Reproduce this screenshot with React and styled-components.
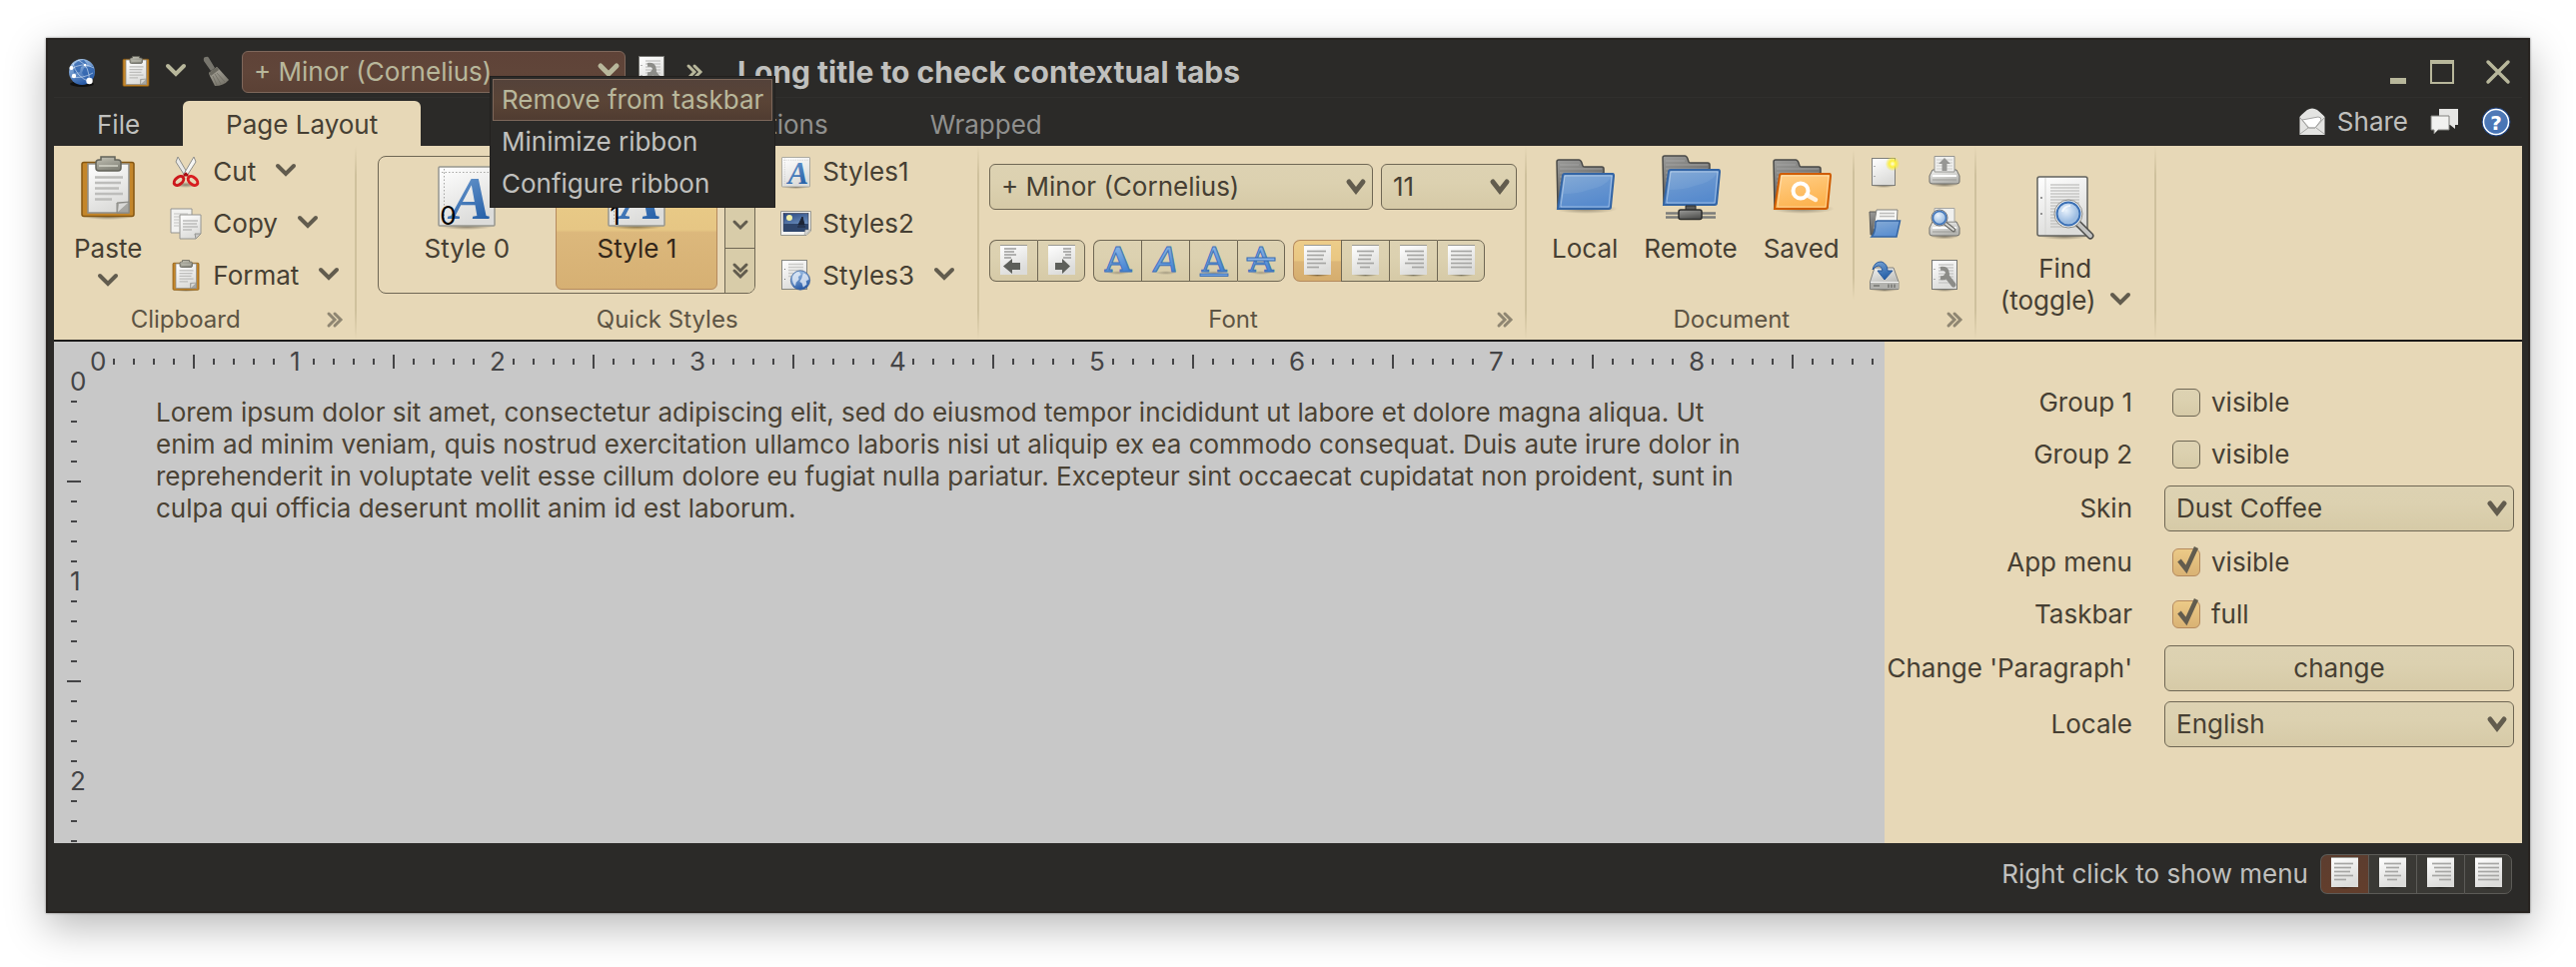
import React from "react";
import styled, { createGlobalStyle, css } from "styled-components";

const c = {
  dark: "#2b2a28",
  darkText: "#c0c0be",
  darkAccent: "#b8b79b",
  sand: "#e7d8b7",
  ink: "#463f33",
  mutedInk: "#5d5444",
  glyph: "#625c4e",
  line: "#6f6754",
  canvas: "#c8c8c8",
  mark: "#444446",
};

const GlobalStyle = createGlobalStyle`
  * { box-sizing: border-box; }
  body { margin: 0; background: #fff; }
  body, button, select, input {
    font-family: Inter, "Liberation Sans", sans-serif;
    font-size: 26px;
    line-height: 32px;
  }
  svg { display: block; flex: none; overflow: visible; }
`;

/* ---------- frame ---------- */

const Page = styled.div`
  height: 100vh;
  min-height: 800px;
  padding: 38px 46px 54px;
  display: flex;
`;

const Window = styled.main`
  flex: 1;
  min-width: 0;
  padding: 0 8px;
  display: flex;
  flex-direction: column;
  background: ${c.dark};
  color: ${c.darkText};
  box-shadow: inset 0 0 0 2px #272320, 0 0 2px rgba(0, 0, 0, 0.5),
    0 14px 38px rgba(0, 0, 0, 0.28);
`;

const PlainButton = styled.button`
  border: 0;
  padding: 0;
  background: none;
  color: inherit;
  display: flex;
  align-items: center;
  white-space: nowrap;
`;

/* ---------- title bar ---------- */

const TitleBar = styled.header`
  height: 60px;
  padding: 8px 8px 0 12px;
  display: flex;
  align-items: center;
  gap: 10px;
  border-bottom: 1px solid #302f2d;
`;

const IconButton = styled(PlainButton)`
  width: 32px;
  height: 40px;
  justify-content: center;
`;

const SplitButton = styled(PlainButton)`
  gap: 14px;
  margin: 0 4px 0 12px;
  & > svg:first-child { margin: 0 2px; }
`;

const Overflow = styled(PlainButton)`
  margin: 0 25px 0 9px;
`;

const Title = styled.h1`
  margin: 0;
  flex: 1;
  font-size: 30px;
  line-height: 36px;
  font-weight: 700;
  white-space: nowrap;
`;

const WindowControls = styled.div`
  display: flex;
  gap: 12px;
  & > :last-child { margin-left: 12px; }
`;

/* ---------- tabs ---------- */

const TabRow = styled.nav`
  height: 48px;
  padding-top: 3px;
  display: flex;
  align-items: stretch;
`;

const Tab = styled(PlainButton)`
  justify-content: center;
  padding: 2px 43px 0;
  color: ${(p) => (p.$quiet ? "#90908e" : c.darkText)};
  ${(p) =>
    p.$selected &&
    css`
      background: ${c.sand};
      color: ${c.ink};
      border-radius: 6px 6px 0 0;
    `}
`;

const LaterTabs = styled.div`
  flex: 1;
  display: flex;
  gap: 16px;
  padding-left: 228px;
`;

const Anchored = styled.div`
  display: flex;
  align-items: center;
  gap: 20px;
  padding: 0 10px 4px 0;
`;

const ShareButton = styled(PlainButton)`
  gap: 12px;
`;

/* ---------- context menu ---------- */

const MenuAnchor = styled.div`
  position: relative;
`;

const Menu = styled.ul`
  position: absolute;
  z-index: 5;
  left: 248px;
  top: 25px;
  margin: 0;
  padding: 2px;
  list-style: none;
  background: ${c.dark};
  border: 1px solid #22201e;
`;

const MenuItem = styled(PlainButton)`
  width: 100%;
  height: 42px;
  padding: 0 8px;
  border: 1px solid ${(p) => (p.$active ? "#7d675a" : "transparent")};
  color: ${(p) => (p.$active ? c.darkAccent : c.darkText)};
  background: ${(p) =>
    p.$active ? "linear-gradient(#54423a, #5a4436 55%, #503c31)" : "none"};
`;

/* ---------- ribbon ---------- */

const Ribbon = styled.section`
  height: 196px;
  display: flex;
  background: ${c.sand};
  color: ${c.ink};
  border-bottom: 2px solid #1c1b1a;
`;

const Separator = styled.div`
  width: 2px;
  flex: none;
  margin: ${(p) => (p.$inner ? "4px 0" : "0")};
  background: linear-gradient(rgba(190, 175, 140, 0), #cfc19d 15%, #cfc19d 85%, rgba(190, 175, 140, 0));
`;

const Group = styled.div`
  display: flex;
  flex-direction: column;
  flex: none;
`;

const GroupBody = styled.div`
  height: 158px;
  display: flex;
  padding: 0 ${(p) => p.$right || 0}px 0 ${(p) => p.$left || 0}px;
`;

const GroupFooter = styled.div`
  display: flex;
  align-items: center;
  padding-top: 1px;
  font-size: 24px;
  line-height: 30px;
  color: ${c.mutedInk};
`;

const GroupName = styled.span`
  flex: 1;
  text-align: center;
`;

const Launcher = styled(PlainButton)`
  width: 38px;
  height: 30px;
  padding-left: 10px;
`;

const BigButton = styled(PlainButton)`
  flex-direction: column;
  align-items: center;
  justify-content: flex-start;
  padding: ${(p) => p.$top || 10}px ${(p) => p.$side || 13}px 0;
  & > svg:first-child { margin-bottom: 13px; }
  & > svg:nth-of-type(2) { margin-top: 7px; }
`;

const TwoLine = styled.span`
  display: grid;
  grid-template-columns: auto auto;
  column-gap: 14px;
  justify-items: center;
  align-items: center;
  & > :first-child { grid-column: 1 / 3; }
`;

const SmallColumn = styled.div`
  display: flex;
  flex-direction: column;
  align-items: flex-start;
  margin-left: ${(p) => p.$gap}px;
`;

const SmallButton = styled(PlainButton)`
  height: 52px;
  & > span + svg { margin-left: 20px; }
`;

const IconSlot = styled.span`
  width: 32px;
  margin-right: 11px;
  display: flex;
  justify-content: center;
`;

const Gallery = styled.div`
  height: 138px;
  margin-top: 10px;
  display: flex;
  border: 1px solid ${c.line};
  border-radius: 8px;
  overflow: hidden;
`;

const GalleryItems = styled.div`
  display: flex;
  gap: 8px;
  padding: 3px 7px;
`;

const GalleryItem = styled(PlainButton)`
  width: 162px;
  flex-direction: column;
  padding-top: ${(p) => (p.$selected ? 5 : 6)}px;
  border-radius: 6px;
  ${(p) =>
    p.$selected &&
    css`
      border: 1px solid #b58a5e;
      color: #33271a;
      background: linear-gradient(#ecd08b, #e6c684 54%, #dcb87c 56%, #d6b073);
    `}
`;

const Swatch = styled.span`
  position: relative;
  margin-bottom: 5px;
`;

const SwatchIndex = styled.span`
  position: absolute;
  left: 2px;
  bottom: -4px;
  color: #000;
`;

const GalleryScroller = styled.div`
  width: 30px;
  display: grid;
  grid-template-rows: repeat(3, 1fr);
  border-left: 1px solid ${c.line};
  background: #d8cca9;
`;

const ScrollButton = styled(PlainButton)`
  justify-content: center;
  & + & { border-top: 1px solid ${c.line}; }
`;

const FontTools = styled.div`
  padding-top: 18px;
  display: flex;
  flex-direction: column;
  gap: 30px;
`;

const ToolRow = styled.div`
  display: flex;
  gap: 8px;
`;

const IconGrid = styled.div`
  display: grid;
  grid-template-columns: 60px 60px;
  grid-auto-rows: 52px;
  justify-items: center;
`;

/* ---------- form controls ---------- */

const raised = css`
  border: 1px solid ${c.line};
  background: linear-gradient(#ddd2b2, #dcd1b0 40%, #d6caa7);
`;

const ComboBox = styled.span`
  position: relative;
  display: flex;
  align-items: center;
  width: ${(p) => p.$width || "100%"};
  & > svg {
    position: absolute;
    right: 7px;
    pointer-events: none;
  }
`;

const Select = styled.select`
  appearance: none;
  width: 100%;
  height: 46px;
  padding: 0 36px 0 11px;
  border-radius: 6px;
  color: ${c.ink};
  ${raised}
  ${(p) =>
    p.$dark &&
    css`
      height: 42px;
      color: ${c.darkAccent};
      border-color: #7e675b;
      background: linear-gradient(#5f4338, #604539 50%, #5b4135);
    `}
`;

const PushButton = styled.button`
  width: 100%;
  height: 46px;
  padding: 0;
  border-radius: 6px;
  color: ${c.ink};
  ${raised}
`;

const Strip = styled.div`
  display: flex;
`;

const StripButton = styled.button`
  width: 48px;
  height: 42px;
  padding: 0;
  display: flex;
  align-items: center;
  justify-content: center;
  ${raised}
  border-right-width: 0;
  &:first-child { border-radius: 7px 0 0 7px; }
  &:last-child { border-radius: 0 7px 7px 0; border-right-width: 1px; }
  ${(p) =>
    p.$selected &&
    css`
      border-color: #b58a5e;
      background: linear-gradient(#edcd8a, #e9c681 50%, #dcb678 52%, #d5ad6e);
    `}
  ${(p) =>
    p.$dark &&
    css`
      height: 40px;
      padding-bottom: 2px;
      border-color: #5c5b57;
      background: ${p.$selected ? "linear-gradient(#5c3d2f, #633e2c)" : "#3a3935"};
    `}
`;

const CheckLabel = styled.label`
  height: 42px;
  margin-left: 8px;
  display: flex;
  align-items: center;
  gap: 11px;
`;

const CheckWrap = styled.span`
  position: relative;
  display: flex;
  & > svg {
    position: absolute;
    left: 0;
    top: -2px;
    pointer-events: none;
  }
`;

const CheckInput = styled.input`
  appearance: none;
  margin: 0;
  width: 28px;
  height: 28px;
  border-radius: 6px;
  ${raised}
  &:checked {
    border-color: #b58a5e;
    background: linear-gradient(#ecca87, #d9b274);
  }
`;

/* ---------- work area ---------- */

const Body = styled.div`
  flex: 1 1 0;
  min-height: 0;
  display: flex;
`;

const Canvas = styled.section`
  flex: 1;
  min-width: 0;
  display: grid;
  grid-template: 30px minmax(0, 1fr) / 30px minmax(0, 1fr);
  background: ${c.canvas};
  color: ${c.mark};
`;

const TopRuler = styled.div`
  grid-column: 2;
  min-width: 0;
  padding-top: 10px;
  display: flex;
  overflow-x: clip;
`;

const SideRuler = styled.div`
  grid-column: 1;
  padding-left: 10px;
  display: flex;
  flex-direction: column;
  overflow-y: clip;
`;

const Mark = styled.span`
  flex: none;
  width: 20px;
  height: 20px;
  display: flex;
  align-items: center;
  justify-content: center;
  &::before {
    content: "";
    background: currentColor;
    width: ${(p) => (p.$side ? (p.$long ? 14 : 6) : 2)}px;
    height: ${(p) => (p.$side ? 2 : p.$long ? 14 : 6)}px;
  }
`;

const MarkNumber = styled.span`
  flex: none;
  width: 20px;
  height: 20px;
  line-height: 20px;
  padding-left: 6px;
`;

const Paragraph = styled.p`
  margin: 0;
  padding: 25px 116px 0 72px;
  color: #4a4234;
`;

const Settings = styled.form`
  width: 638px;
  flex: none;
  padding: 40px 8px 0 2px;
  display: grid;
  grid-template-columns: 1fr 350px;
  column-gap: 32px;
  row-gap: 10px;
  align-content: start;
  align-items: center;
  background: ${c.sand};
  color: ${c.ink};
`;

const FieldName = styled.label`
  text-align: right;
  white-space: nowrap;
`;

const StatusBar = styled.footer`
  height: 70px;
  padding: 0 10px 8px;
  display: flex;
  align-items: center;
  justify-content: flex-end;
  gap: 12px;
`;

/* ---------- glyphs ---------- */

const Defs = () => (
  <svg width="0" height="0" style={{ position: "absolute" }} aria-hidden="true">
    <defs>
      {[
        ["paper", "#ffffff", "#dcdcda"],
        ["steel", "#c6c5b8", "#84847a"],
        ["blue", "#86abd6", "#5c8fd0"],
        ["letter", "#a9c9ec", "#3f80d2"],
        ["serif", "#7ba6d6", "#2660a8"],
        ["orange", "#ffd08a", "#fdb34f"],
        ["grey", "#9c9c9a", "#555553"],
        ["device", "#f4f4f2", "#b4b4b0"],
        ["globe", "#b4d2f0", "#2a5ca8"],
        ["sky", "#28467e", "#7ba0cc"],
        ["brush", "#b0ada2", "#7a776d"],
      ].map(([id, a, b]) => (
        <linearGradient key={id} id={id} x1="0" y1="0" x2="0.4" y2="1">
          <stop offset="0" stopColor={a} />
          <stop offset="1" stopColor={b} />
        </linearGradient>
      ))}
      <radialGradient id="glow">
        <stop offset="0" stopColor="#fffde0" />
        <stop offset="0.45" stopColor="#fdf03c" />
        <stop offset="1" stopColor="#f4e83a" stopOpacity="0.1" />
      </radialGradient>
      <radialGradient id="lens" cx="0.4" cy="0.35">
        <stop offset="0" stopColor="#eaf3fc" />
        <stop offset="1" stopColor="#9dbde2" />
      </radialGradient>
      <radialGradient id="ground">
        <stop offset="0" stopColor="#000" stopOpacity="0.4" />
        <stop offset="1" stopColor="#000" stopOpacity="0" />
      </radialGradient>
    </defs>
  </svg>
);

const Svg = ({ w, h, vw = w, vh = h, children }) => (
  <svg width={w} height={h} viewBox={`0 0 ${vw} ${vh}`} fill="none" aria-hidden="true">
    {children}
  </svg>
);

const Chevron = ({ color = c.glyph, width = 4 }) => (
  <Svg w={20} h={20}>
    <path d="M2 4 L10 12 L18 4" stroke={color} strokeWidth={width} strokeLinecap="round" />
  </Svg>
);

const ComboChevron = ({ color = c.glyph }) => (
  <Svg w={20} h={20}>
    <path d="M3 5 L10 14 L17 5" stroke={color} strokeWidth={5} strokeLinecap="round" />
  </Svg>
);

const MiniChevron = ({ double, up }) => (
  <Svg w={16} h={16}>
    {up ? (
      <path d="M2 11 L8 5 L14 11" stroke={c.glyph} strokeWidth={3} strokeLinecap="round" />
    ) : double ? (
      <path d="M2 2 L8 8 L14 2 M2 8 L8 14 L14 8" stroke={c.glyph} strokeWidth={3} strokeLinecap="round" />
    ) : (
      <path d="M2 5 L8 11 L14 5" stroke={c.glyph} strokeWidth={3} strokeLinecap="round" />
    )}
  </Svg>
);

const DoubleRight = ({ color = "#8f8672" }) => (
  <Svg w={16} h={16}>
    <path d="M2 2 L8 8 L2 14 M8 2 L14 8 L8 14" stroke={color} strokeWidth={3} strokeLinecap="round" />
  </Svg>
);

const ClipboardIcon = ({ small }) => (
  <Svg w={small ? 28 : 54} h={small ? 32 : 64} vw={54} vh={64}>
    <ellipse cx="27" cy="61" rx="25" ry="3" fill="url(#ground)" />
    <rect x="1" y="6.500" width="52" height="54" rx="2" fill="#c4862a" stroke="#855712" strokeWidth="1.500" />
    <path d="M7 8 H48 V57 H7 Z" fill="url(#paper)" stroke="#8e8e8a" strokeWidth="1.500" />
    <path d="M14 21.500 H42 M14 27 H40 M14 32.500 H38 M14 38 H42 M14 43.500 H31" stroke="#bdbdbb" strokeWidth="2.500" />
    <path d="M36 57 V47 L48 46 V57 Z" fill="#a6a6a2" stroke="#858580" />
    <path d="M37 56 L38 48 L47 47 Z" fill="#d8d8d6" />
    <path d="M15 7 Q15 4 18 4 H20 V1 H34 V4 H37 Q40 4 40 7 V12 Q40 15 37 15 H18 Q15 15 15 12 Z" fill="url(#steel)" stroke="#63635a" strokeWidth="1.500" />
    <path d="M18 10 H37" stroke="#d4d4c8" strokeWidth="1.500" />
  </Svg>
);

const ScissorsIcon = () => (
  <Svg w={28} h={32}>
    <ellipse cx="14" cy="29" rx="12" ry="3" fill="url(#ground)" />
    <path d="M6 1 L16 18 L13 20 L4 6 Z" fill="#e9e9e7" stroke="#8e8e8a" />
    <path d="M22 1 L12 18 L15 20 L24 6 Z" fill="#f6f6f4" stroke="#8e8e8a" />
    <path d="M12 20 L14 18 L16 20" stroke="#a80f14" strokeWidth="2.500" />
    <ellipse cx="7" cy="25" rx="5.500" ry="3.500" transform="rotate(-40 7 25)" stroke="#cc181c" strokeWidth="3" />
    <ellipse cx="21" cy="25" rx="5.500" ry="3.500" transform="rotate(40 21 25)" stroke="#d81e20" strokeWidth="3" />
  </Svg>
);

const CopyIcon = () => (
  <Svg w={32} h={32}>
    <path d="M1 1 H22 V25 H1 Z" fill="#f2f2f0" stroke="#949490" />
    <path d="M4 6 H18 M4 9 H18 M4 12 H9 M4 15 H9 M4 18 H9" stroke="#c2c2c0" />
    <path d="M10 7 H31 V26 L26 31 H10 Z" fill="url(#paper)" stroke="#949490" />
    <path d="M13 13 H28 M13 16 H27 M13 19 H28 M13 22 H22" stroke="#bcbcba" strokeWidth="1.500" />
    <path d="M31 26 L25 26 L26 31 Z" fill="#c8c8c6" stroke="#949490" />
  </Svg>
);

const GlobeBall = ({ x, y, r }) => (
  <g transform={`translate(${x} ${y}) scale(${r / 14})`}>
    <circle r="13.500" fill="url(#globe)" stroke="#3c5e94" />
    <path d="M-11 -5 Q-8 -11 -2 -12 L1 -8 L-3 -5 L-2 -1 L-6 3 L-7 8 Q-12 4 -11 -5 Z M4 -10 Q11 -8 12 -1 L8 1 L9 6 L4 10 L2 4 L-1 2 L2 -3 Z" fill="#e6eef8" fillOpacity="0.8" />
  </g>
);

const GlobeIcon = () => (
  <Svg w={28} h={28}>
    <ellipse cx="14" cy="26" rx="12" ry="3" fill="#111" />
    <circle cx="14" cy="14" r="13" fill="url(#globe)" />
    <path d="M5 8 Q9 2 16 2 L19 6 L13 9 L12 14 L6 15 Z M16 10 L25 8 Q28 15 24 21 L18 20 L14 15 Z" fill="#2d62ac" fillOpacity="0.75" />
    <path d="M2 12 Q14 3 26 10 M5 5 Q8 19 22 24 M3 19 Q15 21 25 15 M10 2 Q23 8 21 25" stroke="#e2eefb" strokeOpacity="0.700" strokeWidth="0.800" />
    <circle cx="3.500" cy="10" r="2" fill="#fff" />
    <circle cx="6" cy="18" r="2.200" fill="#fff" />
    <circle cx="21.500" cy="23" r="3.200" fill="#fff" />
    <circle cx="17" cy="7" r="1.200" fill="#fff" />
  </Svg>
);

const BroomIcon = () => (
  <Svg w={28} h={32}>
    <path d="M4 1 Q1 1 2 5 L9 15 L13 12 L7 2 Q6 0 4 1 Z" fill="#77756d" />
    <path d="M7 17 L15 11 L18 14 L27 24 Q22 30 13 30 L8 20 Z" fill="url(#brush)" />
    <path d="M7 17 L15 11 L17 14 L9 20 Z" fill="#6b6960" />
    <path d="M11 20 L15 29 M13 18 L19 28 M15 17 L23 26" stroke="#6a685f" strokeWidth="0.700" />
  </Svg>
);

const Wrench = ({ x = 0, y = 0 }) => (
  <g transform={`translate(${x} ${y})`}>
    <path d="M9 9 Q16 8 16 14 Q15 19 9 18" stroke="#8c8c88" strokeWidth="4" />
    <path d="M15 16 L22 25" stroke="#8c8c88" strokeWidth="5" strokeLinecap="round" />
  </g>
);

const DocWrenchIcon = () => (
  <Svg w={28} h={32}>
    <ellipse cx="14" cy="30" rx="12" ry="2" fill="url(#ground)" />
    <rect x="1.500" y="0.500" width="25" height="29" fill="url(#paper)" stroke="#777773" />
    <path d="M8 5 H23 M8 8 H23 M8 11 H23 M8 14 H23 M8 17 H23 M8 20 H23 M8 23 H20" stroke="#c9c9c7" strokeWidth="1.500" />
    <path d="M4 9 V10 M4 19 V20" stroke="#777" />
    <Wrench x={1} y={0} />
  </Svg>
);

const StyleSwatchIcon = ({ small }) => (
  <Svg w={small ? 29 : 58} h={small ? 31 : 62} vw={58} vh={62}>
    <ellipse cx="29" cy="61" rx="26" ry="3" fill="url(#ground)" />
    <rect x="1" y="1" width="56" height="59" rx="1" fill="url(#paper)" stroke="#96968f" strokeWidth="1.500" />
    <path d="M4 6.500 H54 M6.500 3 V56" stroke="#a6a6a4" strokeDasharray="1.500 2" />
    <text x="13" y="53" fontFamily="Liberation Serif" fontStyle="italic" fontWeight="700" fontSize="62" fill="url(#serif)">A</text>
  </Svg>
);

const PhotoIcon = () => (
  <Svg w={31} h={26}>
    <path d="M0.500 0.500 H30.500 V20 L26 24.500 H0.500 Z" fill="#f2f2f0" stroke="#96968f" />
    <rect x="3" y="2.500" width="25" height="18" fill="url(#sky)" stroke="#223" strokeWidth="0.500" />
    <rect x="3" y="13" width="25" height="8" fill="#2f466c" />
    <circle cx="9" cy="7" r="3" fill="#f2f0a8" />
    <path d="M18 14 L22 6 L24 14 Z M17 16 H25" fill="#1c2436" stroke="#1c2436" />
    <path d="M24 24.500 L25 19 L30.500 19 Z" fill="#d6d6d4" stroke="#96968f" strokeWidth="0.500" />
  </Svg>
);

const DocGlobeIcon = () => (
  <Svg w={29} h={32}>
    <rect x="0.500" y="0.500" width="25" height="29" fill="url(#paper)" stroke="#86867f" />
    <path d="M7 4.500 H22 M7 7.500 H22 M7 10.500 H22 M7 13.500 H12 M7 16.500 H10" stroke="#cacac8" strokeWidth="1.500" />
    <path d="M3.500 9 V10 M3.500 19 V20" stroke="#777" />
    <GlobeBall x={19} y={20.5} r={10} />
  </Svg>
);

const alignLines = {
  left: [[3, 22], [3, 20], [3, 19], [3, 22], [3, 15]],
  center: [[5, 22], [7, 20], [6, 19], [5, 22], [8, 18]],
  right: [[5, 24], [7, 24], [8, 24], [5, 24], [12, 24]],
  justify: [[3, 24], [3, 24], [3, 24], [3, 24], [3, 24]],
};

const AlignIcon = ({ kind }) => (
  <Svg w={27} h={32}>
    <ellipse cx="13.500" cy="30.500" rx="12" ry="1.500" fill="url(#ground)" />
    <rect width="27" height="30" fill="url(#paper)" />
    <path d="M0 0.500 H27" stroke="#9a9a94" />
    {alignLines[kind].map(([a, b], i) => (
      <path key={i} d={`M${a} ${6.5 + i * 4} H${b}`} stroke="#a6a6a4" strokeWidth="1.700" />
    ))}
  </Svg>
);

const IndentIcon = ({ right }) => (
  <Svg w={27} h={32}>
    <rect width="27" height="30" fill="url(#paper)" />
    <path d="M0 0.500 H27" stroke="#9a9a94" />
    <path
      d={right ? "M15 4 H23 M15 7 H23 M17 10 H23 M15 13 H23" : "M4 4 H16 M4 7 H14 M4 10 H16 M4 13 H11"}
      stroke="#9c9c9a"
      strokeWidth="1.500"
    />
    <path
      d={right ? "M22 21.500 L14 14 V18 H7 V25 H14 V29 Z" : "M3 21.500 L12 14 V18 H20 V25 H12 V29 Z"}
      fill="#555752"
      fillOpacity="0.950"
    />
  </Svg>
);

const LetterIcon = ({ kind }) => (
  <Svg w={30} h={32}>
    <ellipse cx="15" cy="28" rx="11" ry="2" fill="url(#ground)" opacity="0.600" />
    <text
      x="15"
      y="27"
      textAnchor="middle"
      fontFamily={kind === "italic" ? "DejaVu Sans" : "DejaVu Serif"}
      fontStyle={kind === "italic" ? "oblique" : "normal"}
      fontWeight={kind === "bold" ? "700" : "400"}
      fontSize="34"
      fill="url(#letter)"
      stroke="#3f72b8"
      strokeWidth="1"
    >
      A
    </text>
    {kind === "underline" && <rect x="1" y="29" width="28" height="2.500" fill="#6f9fdc" stroke="#2f66b2" strokeWidth="0.800" />}
    {kind === "strike" && <rect x="1" y="13" width="28" height="3" fill="#8db5e6" stroke="#2f66b2" />}
  </Svg>
);

const folderFront = "M10 18 H58 Q59 18 59 20 L56 51 Q56 53 54 53 H3 L8 20 Q8 18 10 18 Z";

const FolderBack = () => (
  <>
    <path d="M3 52 L2 6 Q2 4 4 4 H24 Q26 4 27 7 L28 10 Q28 11 30 11 H47 Q49 11 49 13 V30 L8 52 Z" fill="url(#grey)" stroke="#4a4a48" strokeWidth="1.500" />
    <path d="M5 9 H24 M5 13 H47 M5 17 H47 M5 21 H8 M5 25 H8 M5 29 H8 M5 33 H7 M5 37 H7 M5 41 H6" stroke="#b2b2b0" strokeOpacity="0.600" />
  </>
);

const FolderIcon = ({ kind }) => {
  const orange = kind === "saved";
  return (
    <Svg w={60} h={64}>
      <g transform={kind === "remote" ? "translate(0 -4)" : undefined}>
        {kind !== "remote" && <ellipse cx="31" cy="53" rx="32" ry="5" fill="url(#ground)" />}
        <FolderBack />
        <path d={folderFront} fill={orange ? "url(#orange)" : "url(#blue)"} stroke={orange ? "#cf5c00" : "#3465a4"} strokeWidth="2" />
        <path d="M10 20 H57 L54 51 H6 Z" stroke="#fff" strokeOpacity="0.350" />
        {!orange && <path d="M9 38 Q24 38 34 34 Q50 31 56 22 L53 50 H6 Z" fill="#3f78c4" fillOpacity="0.200" />}
      </g>
      {orange && (
        <>
          <circle cx="29" cy="35" r="7.500" stroke="#fff" strokeWidth="4" />
          <path d="M35 39 L44 44" stroke="#fff" strokeOpacity="0.800" strokeWidth="4.500" strokeLinecap="round" />
        </>
      )}
      {kind === "remote" && (
        <>
          <path d="M5 57.500 H55 M5 61.500 H55" stroke="#7c7c7a" strokeWidth="2.500" />
          <path d="M25 50 H35 V55 H25 Z" fill="#5c5c5a" stroke="#2c2c2a" />
          <rect x="18" y="54" width="23" height="9.500" rx="2" fill="url(#grey)" stroke="#2e2e2c" strokeWidth="1.500" />
        </>
      )}
    </Svg>
  );
};

const NewDocIcon = () => (
  <Svg w={30} h={32}>
    <ellipse cx="14" cy="30" rx="12" ry="2" fill="url(#ground)" />
    <rect x="2.500" y="2.500" width="23" height="27" fill="url(#paper)" stroke="#7e7e7a" />
    <path d="M5 10 V11 M5 20 V21" stroke="#777" />
    <circle cx="23" cy="8" r="7" fill="url(#glow)" />
  </Svg>
);

const PrinterBase = () => (
  <>
    <ellipse cx="16" cy="29" rx="14" ry="2.500" fill="url(#ground)" />
    <path d="M4 14 H28 L31 20 V26 Q31 28 28 28 H4 Q1 28 1 26 V20 Z" fill="url(#device)" stroke="#6c6c68" />
    <path d="M4 20 H28" stroke="#fff" strokeWidth="2" />
    <path d="M4 24 H28" stroke="#9a9a96" />
  </>
);

const PrinterIcon = () => (
  <Svg w={32} h={32}>
    <PrinterBase />
    <path d="M6 0.500 H26 V16 H6 Z" fill="#f0f0ee" stroke="#969692" />
    <path d="M8 4 H24 M8 7 H24 M8 10 H24 M8 13 H24" stroke="#cdcdcb" />
    <path d="M16 2 L22 8 H18.500 V15 H13.500 V8 H10 Z" fill="#969694" />
  </Svg>
);

const PreviewIcon = () => (
  <Svg w={32} h={32}>
    <PrinterBase />
    <path d="M6 0.500 H26 V14 H6 Z" fill="#f0f0ee" stroke="#a6a6a2" />
    <path d="M16 15 L25 22" stroke="#6c6c68" strokeWidth="4.500" strokeLinecap="round" />
    <path d="M16 15 L25 22" stroke="#d8d8d4" strokeWidth="2" strokeLinecap="round" />
    <circle cx="11" cy="10" r="8" fill="url(#lens)" stroke="#77777a" strokeWidth="1" />
    <circle cx="11" cy="10" r="6.500" stroke="#3f74b8" strokeWidth="1.500" />
  </Svg>
);

const OpenIcon = () => (
  <Svg w={32} h={30}>
    <path d="M2 26 L1 3 H8 L10 6 H24 V26 Z" fill="url(#grey)" stroke="#5a5a58" />
    <path d="M8 1 L29 1 L28 20 H5 Z" fill="#f6f6f4" stroke="#83837f" />
    <path d="M11 4.500 H26 M11 7.500 H26" stroke="#bebebc" strokeWidth="1.500" />
    <path d="M9 12 H31.500 L28 28 H3 Q7 24 7 13 Z" fill="url(#blue)" stroke="#3465a4" strokeWidth="1.500" />
  </Svg>
);

const SaveIcon = () => (
  <Svg w={31} h={31}>
    <ellipse cx="16" cy="29.500" rx="14" ry="1.500" fill="url(#ground)" />
    <path d="M6 7 H25 L30 21 V28.500 H1.500 V21 Z" fill="url(#device)" stroke="#82827e" />
    <path d="M2 21.500 H30" stroke="#f4f4f2" />
    <path d="M2 22 H30 V28 H2 Z" fill="#b2b2ae" />
    <path d="M20 23.500 V27 M23 23.500 V27 M26 23.500 V27 M5 25 H11" stroke="#767672" strokeWidth="1.500" />
    <path d="M4 9 Q6 0.500 13 1 Q19 3 19 10 H24 L16 19 L9 10 H14 Q13 5 10 5 Q7 5 4 9 Z" fill="url(#serif)" stroke="#2a5a9c" />
  </Svg>
);

const FindIcon = () => (
  <Svg w={58} h={64}>
    <ellipse cx="28" cy="61" rx="24" ry="3" fill="url(#ground)" />
    <rect x="1" y="1" width="50" height="59" rx="2" fill="url(#paper)" stroke="#62625e" strokeWidth="1.500" />
    <path d="M9 2 V59" stroke="#d4d4d2" />
    <path d="M5 21 V23 M5 37 V39" stroke="#777" strokeWidth="1.500" />
    {[8, 11, 14, 17, 20, 23, 26, 29, 32, 35, 38, 41, 44, 47, 50].map((y) => (
      <path key={y} d={`M14 ${y + 1} H43`} stroke="#c0c0be" strokeWidth="1.300" />
    ))}
    <path d="M42 48 L54 60" stroke="#4a4a48" strokeWidth="7" strokeLinecap="round" />
    <path d="M42 48 L54 60" stroke="#c2c2c0" strokeWidth="4" strokeLinecap="round" />
    <circle cx="32" cy="38" r="14" fill="#f4f4f2" stroke="#8c8c88" />
    <circle cx="32" cy="38" r="11.500" fill="url(#lens)" stroke="#3a6fb4" strokeWidth="2" />
    <path d="M26 36 Q28 30 34 30" stroke="#fff" strokeOpacity="0.700" strokeWidth="2" />
  </Svg>
);

const MailIcon = () => (
  <Svg w={26} h={28}>
    <path d="M0.500 9 Q2 7 8 2 Q13 -1 18 2 Q24 7 25.500 9 V27 H0.500 Z" fill="#e4e4e2" />
    <path d="M3 12 L19 9 Q22 9 22 12 L16 20 H9 Z" fill="#fff" stroke="#a4a4a2" />
    <path d="M1 10 L10 20 H16 L25 10 M1 26 L9 20 M25 26 L17 20" stroke="#a6a6a4" />
  </Svg>
);

const ChatIcon = () => (
  <Svg w={29} h={28}>
    <path d="M9 1 H28 V17 H25 L25 21 L20 17 H9 Z" fill="#e6e6e4" />
    <path d="M1 8 H19 V22 H8 L4 26 V22 H1 Z" fill="#f2f2f0" stroke="#82827e" />
  </Svg>
);

const HelpIcon = () => (
  <Svg w={30} h={30}>
    <circle cx="15" cy="15" r="14" fill="#3f6cb0" stroke="#1f3f78" />
    <circle cx="15" cy="15" r="12.500" fill="url(#blue)" stroke="#fff" strokeWidth="1.500" />
    <circle cx="15" cy="15" r="11.500" fill="#3d68aa" fillOpacity="0.700" />
    <text x="15" y="22.500" textAnchor="middle" fontFamily="DejaVu Sans" fontWeight="700" fontSize="20" fill="#fff">?</text>
  </Svg>
);

const MinimizeIcon = () => (
  <Svg w={16} h={24}><rect y="18" width="16" height="6" fill={c.darkAccent} /></Svg>
);
const MaximizeIcon = () => (
  <Svg w={24} h={24}>
    <rect x="1" y="1" width="22" height="22" stroke={c.darkAccent} strokeWidth="2" />
    <rect width="24" height="4" fill={c.darkAccent} />
  </Svg>
);
const CloseIcon = () => (
  <Svg w={24} h={24}>
    <path d="M2 2 L22 22 M22 2 L2 22" stroke={c.darkAccent} strokeWidth="3.500" strokeLinecap="round" />
  </Svg>
);

/* ---------- composed parts ---------- */

const Combo = ({ id, label, options, width, dark }) => (
  <ComboBox $width={width}>
    <Select id={id} aria-label={label} $dark={dark} defaultValue={options[0]}>
      {options.map((o) => <option key={o}>{o}</option>)}
    </Select>
    {dark ? <Chevron color={c.darkAccent} width={5} /> : <ComboChevron />}
  </ComboBox>
);

const Command = ({ icon, children, menu }) => (
  <SmallButton type="button">
    <IconSlot>{icon}</IconSlot>
    <span>{children}</span>
    {menu && <Chevron />}
  </SmallButton>
);

const RibbonGroup = ({ name, launcher, left, right, children }) => (
  <>
    <Group>
      <GroupBody $left={left} $right={right}>{children}</GroupBody>
      {name && (
        <GroupFooter>
          <GroupName>{name}</GroupName>
          {launcher && <Launcher type="button" aria-label={`${name} options`}><DoubleRight /></Launcher>}
        </GroupFooter>
      )}
    </Group>
    <Separator />
  </>
);

const AlignStrip = ({ dark }) => (
  <Strip>
    {["left", "center", "right", "justify"].map((k, i) => (
      <StripButton key={k} type="button" aria-label={`Align ${k}`} $dark={dark} $selected={i === 0}>
        <AlignIcon kind={k} />
      </StripButton>
    ))}
  </Strip>
);

const Check = ({ id, checked, children }) => (
  <CheckLabel>
    <CheckWrap>
      <CheckInput id={id} type="checkbox" defaultChecked={checked} />
      {checked && (
        <Svg w={28} h={30}>
          <path d="M7 14 L14 23 L24 1" stroke={c.glyph} strokeWidth="4.500" />
        </Svg>
      )}
    </CheckWrap>
    {children}
  </CheckLabel>
);

const marks = (count, side) =>
  Array.from({ length: count }, (_, i) =>
    i % 10 === 0 ? (
      <MarkNumber key={i}>{i / 10}</MarkNumber>
    ) : (
      <Mark key={i} $side={side} $long={i % 10 === 5} />
    )
  );

export default function App() {
  return (
    <Page>
      <GlobalStyle />
      <Defs />
      <Window>
        <TitleBar>
          <IconButton type="button" aria-label="Application"><GlobeIcon /></IconButton>
          <SplitButton type="button" aria-label="Paste">
            <ClipboardIcon small />
            <Chevron color={c.darkAccent} />
          </SplitButton>
          <IconButton type="button" aria-label="Clear"><BroomIcon /></IconButton>
          <MenuAnchor>
            <Combo dark label="Font" width="384px" options={["+ Minor (Cornelius)", "+ Major (Cornelius)"]} />
            <Menu>
              <li><MenuItem type="button" $active>Remove from taskbar</MenuItem></li>
              <li><MenuItem type="button">Minimize ribbon</MenuItem></li>
              <li><MenuItem type="button">Configure ribbon</MenuItem></li>
            </Menu>
          </MenuAnchor>
          <IconButton type="button" aria-label="Properties"><DocWrenchIcon /></IconButton>
          <Overflow type="button" aria-label="More"><DoubleRight color={c.darkAccent} /></Overflow>
          <Title>Long title to check contextual tabs</Title>
          <WindowControls>
            <IconButton type="button" aria-label="Minimize"><MinimizeIcon /></IconButton>
            <IconButton type="button" aria-label="Maximize"><MaximizeIcon /></IconButton>
            <IconButton type="button" aria-label="Close"><CloseIcon /></IconButton>
          </WindowControls>
        </TitleBar>

        <TabRow>
          <Tab type="button">File</Tab>
          <Tab type="button" $selected>Page Layout</Tab>
          <LaterTabs>
            <Tab type="button" $quiet>Animations</Tab>
            <Tab type="button" $quiet>Wrapped</Tab>
          </LaterTabs>
          <Anchored>
            <ShareButton type="button"><MailIcon />Share</ShareButton>
            <IconButton type="button" aria-label="Comments"><ChatIcon /></IconButton>
            <IconButton type="button" aria-label="Help"><HelpIcon /></IconButton>
          </Anchored>
        </TabRow>

        <Ribbon>
          <RibbonGroup name="Clipboard" launcher left={7} right={16}>
            <BigButton type="button"><ClipboardIcon />Paste<Chevron /></BigButton>
            <SmallColumn $gap={15}>
              <Command icon={<ScissorsIcon />} menu>Cut</Command>
              <Command icon={<CopyIcon />} menu>Copy</Command>
              <Command icon={<ClipboardIcon small />} menu>Format</Command>
            </SmallColumn>
          </RibbonGroup>

          <RibbonGroup name="Quick Styles" left={21} right={23}>
            <Gallery>
              <GalleryItems>
                {[0, 1].map((n) => (
                  <GalleryItem key={n} type="button" $selected={n === 1}>
                    <Swatch><StyleSwatchIcon /><SwatchIndex>{n}</SwatchIndex></Swatch>
                    Style {n}
                  </GalleryItem>
                ))}
              </GalleryItems>
              <GalleryScroller>
                <ScrollButton type="button" aria-label="Scroll up"><MiniChevron up /></ScrollButton>
                <ScrollButton type="button" aria-label="Scroll down"><MiniChevron /></ScrollButton>
                <ScrollButton type="button" aria-label="Expand"><MiniChevron double /></ScrollButton>
              </GalleryScroller>
            </Gallery>
            <SmallColumn $gap={24}>
              <Command icon={<StyleSwatchIcon small />}>Styles1</Command>
              <Command icon={<PhotoIcon />}>Styles2</Command>
              <Command icon={<DocGlobeIcon />} menu>Styles3</Command>
            </SmallColumn>
          </RibbonGroup>

          <RibbonGroup name="Font" launcher left={10} right={8}>
            <FontTools>
              <ToolRow>
                <Combo label="Font family" width="384px" options={["+ Minor (Cornelius)", "+ Major (Cornelius)"]} />
                <Combo label="Font size" width="136px" options={["11", "12", "14"]} />
              </ToolRow>
              <ToolRow>
                <Strip>
                  <StripButton type="button" aria-label="Indent less"><IndentIcon /></StripButton>
                  <StripButton type="button" aria-label="Indent more"><IndentIcon right /></StripButton>
                </Strip>
                <Strip>
                  {["bold", "italic", "underline", "strike"].map((k) => (
                    <StripButton key={k} type="button" aria-label={k}><LetterIcon kind={k} /></StripButton>
                  ))}
                </Strip>
                <AlignStrip />
              </ToolRow>
            </FontTools>
          </RibbonGroup>

          <RibbonGroup name="Document" launcher left={12}>
            <BigButton type="button"><FolderIcon kind="local" />Local</BigButton>
            <BigButton type="button"><FolderIcon kind="remote" />Remote</BigButton>
            <BigButton type="button"><FolderIcon kind="saved" />Saved</BigButton>
            <Separator $inner />
            <IconGrid>
              <SmallButton type="button" aria-label="New"><NewDocIcon /></SmallButton>
              <SmallButton type="button" aria-label="Print"><PrinterIcon /></SmallButton>
              <SmallButton type="button" aria-label="Open"><OpenIcon /></SmallButton>
              <SmallButton type="button" aria-label="Print preview"><PreviewIcon /></SmallButton>
              <SmallButton type="button" aria-label="Save"><SaveIcon /></SmallButton>
              <SmallButton type="button" aria-label="Document properties"><DocWrenchIcon /></SmallButton>
            </IconGrid>
          </RibbonGroup>

          <RibbonGroup>
            <BigButton type="button" $top={30} $side={24}>
              <FindIcon />
              <TwoLine>
                <span>Find</span>
                <span>(toggle)</span>
                <Chevron />
              </TwoLine>
            </BigButton>
          </RibbonGroup>
        </Ribbon>

        <Body>
          <Canvas>
            <TopRuler>{marks(90)}</TopRuler>
            <SideRuler>{marks(30, true)}</SideRuler>
            <Paragraph>
              Lorem ipsum dolor sit amet, consectetur adipiscing elit, sed do eiusmod tempor
              incididunt ut labore et dolore magna aliqua. Ut enim ad minim veniam, quis nostrud
              exercitation ullamco laboris nisi ut aliquip ex ea commodo consequat. Duis aute irure
              dolor in reprehenderit in voluptate velit esse cillum dolore eu fugiat nulla pariatur.
              Excepteur sint occaecat cupidatat non proident, sunt in culpa qui officia deserunt
              mollit anim id est laborum.
            </Paragraph>
          </Canvas>
          <Settings>
            <FieldName htmlFor="group1">Group 1</FieldName>
            <Check id="group1">visible</Check>
            <FieldName htmlFor="group2">Group 2</FieldName>
            <Check id="group2">visible</Check>
            <FieldName htmlFor="skin">Skin</FieldName>
            <Combo id="skin" options={["Dust Coffee", "Dust"]} />
            <FieldName htmlFor="appmenu">App menu</FieldName>
            <Check id="appmenu" checked>visible</Check>
            <FieldName htmlFor="taskbar">Taskbar</FieldName>
            <Check id="taskbar" checked>full</Check>
            <FieldName htmlFor="change">Change 'Paragraph'</FieldName>
            <PushButton id="change" type="button">change</PushButton>
            <FieldName htmlFor="locale">Locale</FieldName>
            <Combo id="locale" options={["English", "French"]} />
          </Settings>
        </Body>

        <StatusBar>
          <span>Right click to show menu</span>
          <AlignStrip dark />
        </StatusBar>
      </Window>
    </Page>
  );
}
